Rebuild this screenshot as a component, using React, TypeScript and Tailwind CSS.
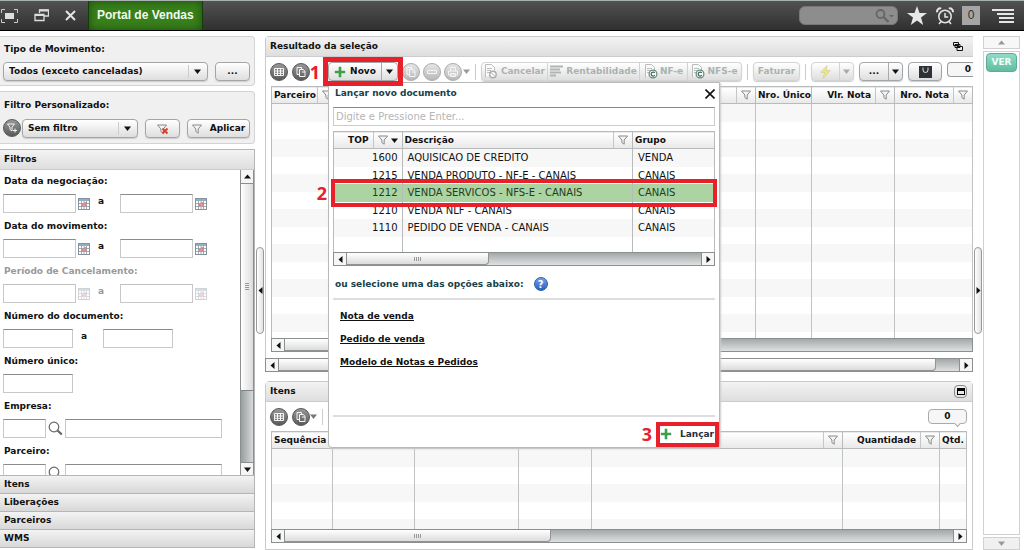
import type { ReactNode } from 'react';
import clsx from 'clsx';

type Column = {
  label?: string;
  width?: string;
  align?: string;
  filter?: boolean;
  sorted?: boolean;
};

const salesColumns: Column[] = [
  { label: 'Parceiro', width: 'w-[64px]', filter: true },
  { filter: true },
  { label: 'Nro. Único', width: 'w-[56px]' },
  { label: 'Vlr. Nota', width: 'w-[83px]', align: 'text-right', filter: true },
  { label: 'Nro. Nota', width: 'w-[78px]', align: 'text-right', filter: true },
];

const itemColumns: Column[] = [
  { label: 'Sequência', width: 'w-[60px]' },
  { width: 'w-[82px]' },
  { width: 'w-[104px]' },
  { width: 'w-[73px]' },
  { filter: true },
  { label: 'Quantidade', width: 'w-[97px]', align: 'text-right', filter: true },
  { label: 'Qtd.', width: 'w-[27px]' },
];

const topColumns: Column[] = [
  { label: 'TOP', width: 'w-[68px]', align: 'text-right', filter: true, sorted: true },
  { label: 'Descrição', filter: true },
  { label: 'Grupo', width: 'w-[82px]' },
];

const tops = [
  { code: '1600', name: 'AQUISICAO DE CREDITO', group: 'VENDA' },
  { code: '1215', name: 'VENDA PRODUTO - NF-E - CANAIS', group: 'CANAIS' },
  { code: '1212', name: 'VENDA SERVICOS - NFS-E - CANAIS', group: 'CANAIS' },
  { code: '1210', name: 'VENDA NLF - CANAIS', group: 'CANAIS' },
  { code: '1110', name: 'PEDIDO DE VENDA - CANAIS', group: 'CANAIS' },
];

const buttonStyle =
  'flex h-[19px] shrink-0 items-center justify-center rounded border border-[#a3a6a8] bg-gradient-to-b from-white to-[#dedede] text-[9px] font-bold shadow-[0_1px_1px_#ccc]';

/* Icons */

function FunnelIcon() {
  return (
    <svg viewBox="0 0 10 10" className="h-[10px] w-[10px] shrink-0" fill="#f4f4f4" stroke="#8a8a8a">
      <path d="M.5 1h9L6.2 5v4.2L3.9 7.6V5z" />
    </svg>
  );
}

function ClearFilterIcon() {
  return (
    <svg viewBox="0 0 12 12" className="h-3 w-3" fill="#f4f4f4" stroke="#8a8a8a">
      <path d="M.5 2h9L6.2 6v4.2L3.9 8.6V6z" />
      <path d="M5.5 5.5l5 5m0-5l-5 5" stroke="#d8402c" strokeWidth="2" />
    </svg>
  );
}

function CalendarIcon({ faded }: { faded?: boolean }) {
  return (
    <svg viewBox="0 0 12 12" className={clsx('h-3 w-3 shrink-0', faded && 'opacity-40')}>
      <rect x=".5" y=".5" width="11" height="11" fill="#fff" stroke="#85929b" />
      <rect x="1" y="1" width="10" height="2" fill="#8fb0c4" />
      <path d="M1 5.5h10M1 8.5h10M3.5 3v8M6 3v8M8.5 3v8" stroke="#8b979e" strokeWidth=".8" />
      <path d="M6.3 4h2v2h-2zM3.8 6h2v2.2h-2zM6.3 6h2v2.2h-2z" fill="#e87f88" />
    </svg>
  );
}

function MagnifierIcon() {
  return (
    <svg viewBox="0 0 15 15" className="h-[15px] w-[15px] shrink-0" fill="none" stroke="#666">
      <circle cx="6" cy="6" r="4.8" strokeWidth="1.2" />
      <path d="M9.5 9.5l4.3 4" strokeWidth="2.2" />
    </svg>
  );
}

function PlusIcon() {
  return (
    <svg viewBox="0 0 12 12" className="h-3 w-3 shrink-0" stroke="#3ba047" strokeWidth="2.6">
      <path d="M6 .8v10.4M.8 6h10.4" />
    </svg>
  );
}

function DocumentIcon({ kind }: { kind: 'cancel' | 'fiscal' }) {
  return (
    <svg viewBox="0 0 14 15" className="h-[15px] w-[14px] shrink-0" fill="none" stroke="#b9bdbd">
      <path d="M1.5 13.5V.5h6l3 3v3M3 4.5h5M3 6.5h4M3 8.5h3" fill="#fbfbfb" />
      {kind === 'cancel' ? (
        <>
          <circle cx="9" cy="10.5" r="3.2" fill="#fff" stroke="#aaa" strokeWidth="1.4" />
          <path d="M7 8.5l4 4" stroke="#aaa" />
        </>
      ) : (
        <>
          <circle cx="9" cy="10" r="3.9" fill="#fff" stroke="#608876" strokeWidth="1.2" />
          <path d="M10.8 8.9a2 2 0 1 0 0 2.3" stroke="#406d59" strokeWidth="1.3" />
        </>
      )}
    </svg>
  );
}

function ReportIcon() {
  return (
    <svg viewBox="0 0 13 13" className="h-[13px] w-[13px] shrink-0" stroke="#b1b4b4" strokeWidth="2">
      <path d="M0 1.5h13M0 4.5h10M0 7.5h11M0 10.5h6" />
    </svg>
  );
}

function Caret({ direction, className }: { direction: 'up' | 'down' | 'left' | 'right'; className?: string }) {
  const shapes = {
    up: 'M0 5.5h7L3.5 1.5z',
    down: 'M0 1.5h7L3.5 6z',
    left: 'M5.5 0v7L1.5 3.5z',
    right: 'M1.5 0v7l4-3.5z',
  };
  return (
    <svg viewBox="0 0 7 7" className={clsx('h-[7px] w-[7px] shrink-0', className)} fill="currentColor">
      <path d={shapes[direction]} />
    </svg>
  );
}

type RoundIcon = 'grid' | 'copy' | 'minus' | 'print' | 'filter';

function RoundButton({ icon, label, faded }: { icon: RoundIcon; label: string; faded?: boolean }) {
  return (
    <button
      aria-label={label}
      className={clsx(
        'flex h-[18px] w-[18px] shrink-0 items-center justify-center rounded-full border',
        faded ? 'border-[#aaa] bg-gradient-to-b from-[#e6e6e6] to-[#b8b8b8]' : 'border-[#555] bg-gradient-to-b from-[#999] to-[#5a5a5a]',
      )}
    >
      <svg viewBox="0 0 12 12" className="h-3 w-3" fill="none" stroke="#f5f5f5">
        {icon === 'grid' && <path d="M1.5 2.5h9v7h-9zM1.5 5h9M1.5 7.3h9M4.5 2.5v7M7.5 2.5v7" />}
        {icon === 'copy' && <path d="M2 1.5h4.5v2M2 1.5v7h2M4.5 3.5h4l1.5 2v5H4.5zM7 6h3" />}
        {icon === 'minus' && <path d="M1.5 4.5h9v3h-9z" />}
        {icon === 'print' && <path d="M3.5 5V1.5h5V5M1.5 5h9v4h-9zM3.5 7.5h5v3h-5z" />}
        {icon === 'filter' && <path d="M1.5 2h7L6 5v4L4 7.5V5zM9 6.5v4M7 8.5h4" />}
      </svg>
    </button>
  );
}

/* Scrollbars */

function HorizontalScrollbar({ thumb, end = true }: { thumb: string; end?: boolean }) {
  return (
    <div className="flex h-[14px] shrink-0 border border-[#8b8f8f] bg-gradient-to-b from-[#a4a8a8] to-[#dfe1e1]">
      <button aria-label="Rolar para a esquerda" className="flex w-[13px] shrink-0 items-center justify-center border-r border-[#8b8f8f] bg-[#f6f6f6]">
        <Caret direction="left" />
      </button>
      <div className={clsx('flex items-center justify-center rounded-br-sm border-r border-b border-[#909494] bg-gradient-to-b from-white to-[#dcdcdc]', thumb)}>
        <span className="h-1 w-2 bg-[repeating-linear-gradient(90deg,#999_0_1px,transparent_1px_2px)]" />
      </div>
      {end && (
        <button aria-label="Rolar para a direita" className="ml-auto flex w-[13px] shrink-0 items-center justify-center border-l border-[#8b8f8f] bg-[#f6f6f6]">
          <Caret direction="right" />
        </button>
      )}
    </div>
  );
}

function VerticalScrollbar() {
  return (
    <div className="flex w-[14px] shrink-0 flex-col border-x border-[#8b8f8f] bg-gradient-to-r from-[#999e9e] to-[#d7dada]">
      <button aria-label="Rolar para cima" className="flex h-[14px] items-center justify-center border-b border-[#8b8f8f] bg-[#f6f6f6]">
        <Caret direction="up" />
      </button>
      <div className="flex h-[68%] items-center justify-center border-b border-[#808484] bg-gradient-to-r from-white to-[#dcdcdc]">
        <span className="h-2 w-1 bg-[repeating-linear-gradient(#999_0_1px,transparent_1px_2px)]" />
      </div>
      <button aria-label="Rolar para baixo" className="mt-auto flex h-[13px] items-center justify-center border-t border-[#8b8f8f] bg-[#f6f6f6]">
        <Caret direction="down" />
      </button>
    </div>
  );
}

function Splitter({ direction }: { direction: 'left' | 'right' }) {
  return (
    <div className="flex w-[10px] shrink-0 items-center justify-center">
      <button
        aria-label="Recolher painel"
        className="flex h-[87px] w-2 items-center justify-center rounded border border-[#999] bg-gradient-to-r from-white to-[#e2e2e2]"
      >
        <Caret direction={direction} />
      </button>
    </div>
  );
}

/* Grid */

function GridHead({ columns }: { columns: Column[] }) {
  return (
    <thead>
      <tr className="h-[17px] border-y border-[#b8bbbb] bg-gradient-to-b from-white to-[#e9e9e9]">
        {columns.map((column, index) => (
          <th key={index} className={clsx('border-r border-[#b8bbbb] p-0 text-left', column.width)}>
            <div className="flex h-4 items-center">
              <span className={clsx('min-w-0 flex-1 pl-[2px] whitespace-nowrap', column.align, column.filter && column.align && 'pr-1')}>
                {column.label}
              </span>
              {column.filter && (
                <span className="flex h-4 shrink-0 items-center gap-[3px] border-l border-[#c4c7c7] px-1">
                  <FunnelIcon />
                  {column.sorted && <Caret direction="down" />}
                </span>
              )}
            </div>
          </th>
        ))}
      </tr>
    </thead>
  );
}

function EmptyGrid({ columns, rows }: { columns: Column[]; rows: number }) {
  return (
    <div className="min-h-0 flex-1 overflow-hidden border-l border-[#b8bbbb]">
      <table className="w-full table-fixed border-collapse">
        <GridHead columns={columns} />
        <tbody>
          {Array.from({ length: rows }, (_, row) => (
            <tr key={row} className="h-[18px] odd:bg-[#f7f7f7] even:h-[17px]">
              {columns.map((_column, index) => (
                <td key={index} className="border-r border-[#c0c3c3] p-0" />
              ))}
            </tr>
          ))}
        </tbody>
      </table>
    </div>
  );
}

function PanelHeader({ title, children }: { title: string; children?: ReactNode }) {
  return (
    <div className="flex h-5 shrink-0 items-center justify-between border-b border-[#ccc] bg-gradient-to-b from-[#f3f3f3] to-[#dedede] pr-[5px] pl-1">
      <h2>{title}</h2>
      {children}
    </div>
  );
}

/* Sidebar */

function TextBox({ label, id, width, disabled }: { label: string; id?: string; width: string; disabled?: boolean }) {
  return (
    <input
      id={id}
      aria-label={id ? undefined : label}
      disabled={disabled}
      className={clsx(
        'h-[19px] shrink-0 border border-[#c8c8c8] bg-white px-1 outline-none',
        disabled ? 'border-t-[#c0c0c0]' : 'border-t-[#8b8b8b]',
        width,
      )}
    />
  );
}

function Field({ label, id, disabled, children }: { label: string; id: string; disabled?: boolean; children: ReactNode }) {
  return (
    <div className={clsx('flex h-[45px] flex-col pl-[3px]', disabled && 'text-[#999]')}>
      <label htmlFor={id} className="flex h-6 items-center pb-[2px] pl-px">
        {label}
      </label>
      <div className="flex items-center">{children}</div>
    </div>
  );
}

function DateRange({ label, id, disabled }: { label: string; id: string; disabled?: boolean }) {
  return (
    <Field label={label} id={id} disabled={disabled}>
      <TextBox id={id} label={label} width="w-[73px]" disabled={disabled} />
      <button type="button" aria-label="Abrir calendário" className="ml-[2px]">
        <CalendarIcon faded={disabled} />
      </button>
      <span className="w-[30px] pb-1 pl-2">a</span>
      <TextBox label={`${label} até`} width="w-[73px]" disabled={disabled} />
      <button type="button" aria-label="Abrir calendário" className="ml-[2px]">
        <CalendarIcon faded={disabled} />
      </button>
    </Field>
  );
}

function Lookup({ label, id }: { label: string; id: string }) {
  return (
    <Field label={label} id={id}>
      <TextBox id={id} label={label} width="w-[43px]" />
      <button type="button" aria-label="Pesquisar" className="mx-[2px]">
        <MagnifierIcon />
      </button>
      <TextBox label={`Nome ${label}`} width="w-[157px]" />
    </Field>
  );
}

function Dropdown({ id, value }: { id: string; value: string }) {
  return (
    <div className="relative min-w-0 flex-1">
      <select id={id} className={clsx(buttonStyle, 'w-full appearance-none pl-[5px]')}>
        <option>{value}</option>
      </select>
      <span className="pointer-events-none absolute inset-y-[3px] right-[2px] flex w-[18px] items-center justify-center border-l border-[#ccc]">
        <Caret direction="down" />
      </span>
    </div>
  );
}

function Sidebar() {
  return (
    <aside className="flex w-[255px] shrink-0 flex-col pt-[5px] pb-[2px]">
      <section className="mb-[5px] h-[50px] shrink-0 rounded-r border border-l-0 border-[#d3d3d3] bg-[#f0f0f0] pr-1 pl-[3px]">
        <label htmlFor="tipo" className="flex h-[25px] items-center pb-px pl-px">
          Tipo de Movimento:
        </label>
        <div className="flex gap-[7px]">
          <Dropdown id="tipo" value="Todos (exceto canceladas)" />
          <button aria-label="Mais tipos" className={clsx(buttonStyle, 'w-[35px]')}>
            ...
          </button>
        </div>
      </section>

      <section className="mb-[5px] h-[53px] shrink-0 rounded-r border border-l-0 border-[#d3d3d3] bg-[#f0f0f0] pr-1 pl-[3px]">
        <label htmlFor="filtro" className="flex h-[27px] items-center pb-px pl-px">
          Filtro Personalizado:
        </label>
        <div className="flex">
          <RoundButton icon="filter" label="Novo filtro" />
          <div className="mr-[7px] ml-px flex flex-1">
            <Dropdown id="filtro" value="Sem filtro" />
          </div>
          <button aria-label="Limpar filtro" className={clsx(buttonStyle, 'mr-[7px] w-[35px]')}>
            <ClearFilterIcon />
          </button>
          <button className={clsx(buttonStyle, 'w-[63px] gap-2')}>
            <FunnelIcon />
            Aplicar
          </button>
        </div>
      </section>

      <section className="flex min-h-0 flex-1 flex-col border-r border-[#b5b5b5]">
        <div className="border-t border-[#b5b5b5]">
          <PanelHeader title="Filtros" />
        </div>
        <div className="flex min-h-0 flex-1">
          <form className="flex-1 overflow-hidden">
            <DateRange label="Data da negociação:" id="negociacao" />
            <DateRange label="Data do movimento:" id="movimento" />
            <DateRange label="Período de Cancelamento:" id="cancelamento" disabled />
            <Field label="Número do documento:" id="documento">
              <TextBox id="documento" label="Número do documento" width="w-[70px]" />
              <span className="w-[30px] pb-1 pl-2">a</span>
              <TextBox label="Número do documento até" width="w-[70px]" />
            </Field>
            <Field label="Número único:" id="unico">
              <TextBox id="unico" label="Número único" width="w-[70px]" />
            </Field>
            <Lookup label="Empresa:" id="empresa" />
            <Lookup label="Parceiro:" id="parceiro" />
          </form>
          <VerticalScrollbar />
        </div>
        {['Itens', 'Liberações', 'Parceiros', 'WMS'].map((title) => (
          <button
            key={title}
            className="h-[18px] shrink-0 border-t border-[#b5b5b5] bg-gradient-to-b from-[#f3f3f3] to-[#d8d8d8] pl-1 text-left last:h-[19px] last:border-b"
          >
            {title}
          </button>
        ))}
      </section>
    </aside>
  );
}

/* New document popup */

function NewDocumentPopup() {
  return (
    <div
      role="dialog"
      aria-labelledby="popup-title"
      className="absolute top-full left-0 z-10 mt-px flex h-[366px] w-[392px] flex-col rounded-b border border-[#b9b9b9] bg-white px-1 font-bold shadow-[1px_1px_2px_#ccc]"
    >
      <div className="flex h-6 items-center justify-between pb-[3px] pl-[2px]">
        <h2 id="popup-title" className="text-[#17414a]">
          Lançar novo documento
        </h2>
        <button aria-label="Fechar">
          <svg viewBox="0 0 10 10" className="h-[10px] w-[10px]" stroke="#111" strokeWidth="1.6">
            <path d="M.5.5l9 9m0-9l-9 9" />
          </svg>
        </button>
      </div>
      <input
        aria-label="Pesquisar TOP"
        placeholder="Digite e Pressione Enter..."
        className="h-[19px] shrink-0 border border-[#ccc] border-t-[#888] px-[2px] text-[10px] font-normal outline-none placeholder:text-[#b5b5b5]"
      />

      <div className="relative mt-[5px] shrink-0">
        <div className="h-[121px] overflow-hidden border-l border-[#b8bbbb]">
          <table className="w-full table-fixed border-collapse">
            <GridHead columns={topColumns} />
            <tbody className="text-[10px] font-normal">
              {tops.map((top) => (
                <tr
                  key={top.code}
                  className={clsx('h-[18px] even:h-[17px]', top.code === '1212' ? 'bg-[#acd3a2] text-[#1f3d24]' : 'odd:bg-[#f7f7f7]')}
                >
                  <td className="border-r border-[#b8bbbb] p-0 pr-1 text-right">{top.code}</td>
                  <td className="border-r border-[#b8bbbb] p-0 pl-[5px]">{top.name}</td>
                  <td className="border-r border-[#b8bbbb] p-0 pl-[5px]">{top.group}</td>
                </tr>
              ))}
              <tr className="h-[18px]">
                <td className="border-r border-[#b8bbbb]" />
                <td className="border-r border-[#b8bbbb]" />
                <td className="border-r border-[#b8bbbb]" />
              </tr>
            </tbody>
          </table>
        </div>
        <HorizontalScrollbar thumb="w-[142px]" />
        <div className="pointer-events-none absolute -inset-x-[2px] top-12 h-7 border-4 border-[#e8202a]">
          <Marker value="2" />
        </div>
      </div>

      <div className="flex h-[34px] shrink-0 items-center gap-[10px] border-b-2 border-[#ddd] pt-1 pl-[2px] text-[#17414a]">
        ou selecione uma das opções abaixo:
        <button
          aria-label="Ajuda"
          className="flex h-[14px] w-[14px] items-center justify-center rounded-full border border-[#2c5eab] bg-gradient-to-b from-[#70a3e8] to-[#2b60bc] text-[10px] text-white"
        >
          ?
        </button>
      </div>
      <nav className="flex flex-1 flex-col items-start gap-[9px] pt-[9px] pl-[7px] leading-[14px] underline">
        <a href="#nota">Nota de venda</a>
        <a href="#pedido">Pedido de venda</a>
        <a href="#modelo">Modelo de Notas e Pedidos</a>
      </nav>
      <div className="flex h-8 shrink-0 items-center justify-end border-t-2 border-[#ddd] pt-1">
        <div className="relative">
          <button className="flex h-[17px] w-[55px] items-center justify-between pr-px text-[#222f42]">
            <PlusIcon />
            Lançar
          </button>
          <div className="pointer-events-none absolute -inset-x-1 -inset-y-1 border-4 border-[#e8202a]">
            <Marker value="3" />
          </div>
        </div>
      </div>
    </div>
  );
}

function Marker({ value }: { value: string }) {
  return (
    <span className="absolute inset-y-0 right-full mr-2 flex items-center font-['Open_Sans',sans-serif] text-[18px] leading-none font-bold text-[#e8202a]">
      {value}
    </span>
  );
}

/* Main area */

function Separator() {
  return <span className="mx-[5px] h-4 w-px shrink-0 bg-[#ccc]" />;
}

function SalesToolbar() {
  return (
    <div className="flex h-[29px] shrink-0 items-center pl-1">
      <RoundButton icon="grid" label="Configurar grade" />
      <div className="ml-1 flex items-center">
        <RoundButton icon="copy" label="Opções" />
      </div>
      <div className="relative ml-[18px] shrink-0">
        <div className={clsx(buttonStyle, 'w-[70px]')}>
          <button className="flex flex-1 items-center justify-center gap-1">
            <PlusIcon />
            Novo
          </button>
          <button aria-label="Mais opções de novo" className="flex h-full w-4 items-center justify-center border-l border-[#aaa]">
            <Caret direction="down" />
          </button>
        </div>
        <NewDocumentPopup />
        <div className="pointer-events-none absolute -inset-x-[5px] -inset-y-[5px] z-20 border-[5px] border-[#e8202a]">
          <Marker value="1" />
        </div>
      </div>

      <div className="ml-1 flex shrink-0 items-center gap-[3px]">
        <RoundButton icon="copy" label="Duplicar" faded />
        <RoundButton icon="minus" label="Remover" faded />
        <RoundButton icon="print" label="Imprimir" faded />
        <Caret direction="down" className="-ml-[2px] text-[#999]" />
      </div>
      <Separator />

      <div className="flex shrink-0 text-[#aab2ae]">
        <button disabled className={clsx(buttonStyle, 'w-[67px] gap-[3px] rounded-r-none border-[#d3d3d3]')}>
          <DocumentIcon kind="cancel" />
          Cancelar
        </button>
        <button disabled className={clsx(buttonStyle, 'w-[92px] gap-[3px] rounded-none border-l-0 border-[#d3d3d3]')}>
          <ReportIcon />
          Rentabilidade
        </button>
        <button disabled className={clsx(buttonStyle, 'w-[48px] gap-[2px] rounded-none border-l-0 border-[#d3d3d3]')}>
          <DocumentIcon kind="fiscal" />
          NF-e
        </button>
        <button disabled className={clsx(buttonStyle, 'w-[54px] gap-[2px] rounded-l-none border-l-0 border-[#d3d3d3]')}>
          <DocumentIcon kind="fiscal" />
          NFS-e
        </button>
      </div>
      <Separator />
      <button disabled className={clsx(buttonStyle, 'w-[47px] border-[#d3d3d3] text-[#aab2ae]')}>
        Faturar
      </button>
      <Separator />

      <div className={clsx(buttonStyle, 'w-[43px] border-[#d3d3d3]')}>
        <button disabled aria-label="Ação rápida" className="flex flex-1 justify-center">
          <svg viewBox="0 0 11 14" className="h-[14px] w-[11px]" fill="#ece87c" stroke="#d3cf9a" strokeWidth=".7">
            <path d="M7 .5L.7 7.5h3.8L3 13.5l7.3-8H6z" />
          </svg>
        </button>
        <button disabled aria-label="Mais ações" className="flex h-full w-[14px] items-center justify-center border-l border-[#d3d3d3] text-[#aaa]">
          <Caret direction="down" />
        </button>
      </div>
      <div className={clsx(buttonStyle, 'ml-[5px] w-[44px]')}>
        <button aria-label="Outras opções" className="flex-1">
          ...
        </button>
        <button aria-label="Abrir outras opções" className="flex h-full w-[14px] items-center justify-center border-l border-[#aaa]">
          <Caret direction="down" />
        </button>
      </div>
      <button aria-label="Sacola" className={clsx(buttonStyle, 'ml-[5px] w-[34px]')}>
        <svg viewBox="0 0 13 12" className="h-3 w-[13px]">
          <path d="M0 0h13v12H0z" fill="#2e3236" />
          <path d="M4 1.5V4a2.5 2.5 0 0 0 5 0V1.5" fill="none" stroke="#ddd" />
        </svg>
      </button>
      <output className="mb-[5px] ml-[5px] flex h-[15px] min-w-0 flex-1 items-center justify-end rounded-l border border-r-0 border-[#999] bg-[#f6f6f6] pr-[2px]">
        0
      </output>
    </div>
  );
}

function SalesPanel() {
  return (
    <section className="flex min-h-0 flex-1 flex-col">
      <div className="flex min-h-0 flex-1 flex-col rounded-tl border-t border-l border-[#c9c9c9]">
        <PanelHeader title="Resultado da seleção">
          <button aria-label="Restaurar janelas" className="mr-[5px]">
            <svg viewBox="0 0 10 9" className="h-[9px] w-[10px]" fill="#eee" stroke="#111">
              <path d="M.5.5h5v3h-5zM2 2.5h5v3H2zM4 4.5h5.5v4H4z" />
            </svg>
          </button>
        </PanelHeader>
        <SalesToolbar />
        <div className="mb-[6px] ml-[5px] flex min-h-0 flex-1 flex-col">
          <EmptyGrid columns={salesColumns} rows={14} />
          <HorizontalScrollbar thumb="w-[200px]" end={false} />
        </div>
      </div>
      <HorizontalScrollbar thumb="w-[93%]" />
    </section>
  );
}

function ItemsPanel() {
  return (
    <section className="mt-[9px] flex h-[169px] shrink-0 flex-col rounded-t border border-[#c9c9c9]">
      <PanelHeader title="Itens">
        <button aria-label="Maximizar" className="flex h-[13px] w-[13px] items-center justify-center rounded-sm border border-[#888]">
          <span className="h-[7px] w-2 border border-t-[3px] border-black" />
        </button>
      </PanelHeader>
      <div className="flex h-[29px] shrink-0 items-center pr-[5px] pl-1">
        <RoundButton icon="grid" label="Configurar grade" />
        <div className="ml-1 flex items-center">
          <RoundButton icon="copy" label="Opções" />
          <Caret direction="down" className="text-[#777]" />
        </div>
        <Separator />
        <output className="relative ml-auto flex h-[15px] w-[39px] items-center justify-center rounded border border-[#aaa] bg-[#f6f6f6]">
          0
          <span className="absolute right-[6px] -bottom-[3px] h-[5px] w-[5px] rotate-45 border-r border-b border-[#aaa] bg-[#f6f6f6]" />
        </output>
      </div>
      <div className="mr-[5px] mb-[6px] ml-[5px] flex min-h-0 flex-1 flex-col">
        <EmptyGrid columns={itemColumns} rows={5} />
        <HorizontalScrollbar thumb="w-[266px]" />
      </div>
    </section>
  );
}

function TopBar() {
  return (
    <header className="flex h-[31px] shrink-0 items-center border-t border-b border-t-[#a9b1b1] border-b-black bg-gradient-to-b from-[#525252] to-[#303030] pr-[10px] text-[#ddd]">
      <button aria-label="Tela cheia">
        <svg viewBox="0 0 19 16" className="h-4 w-[19px]" fill="none" stroke="#ccc">
          <path d="M1.5 5V1.5H5M14 1.5h3.5V5M1.5 11v3.5H5M14 14.5h3.5V11" />
          <path d="M5 5h9v6H5z" fill="#ddd" stroke="none" />
        </svg>
      </button>
      <button aria-label="Restaurar" className="ml-[15px]">
        <svg viewBox="0 0 15 13" className="h-[13px] w-[15px]" fill="none" stroke="#ddd" strokeWidth="1.3">
          <path d="M5.5 4V1h9v6H10M1 5.5h9v6H1z" />
          <path d="M5.5 1.5h9M1 6h9" strokeWidth="1.8" />
        </svg>
      </button>
      <button aria-label="Fechar" className="ml-4">
        <svg viewBox="0 0 11 11" className="h-[11px] w-[11px]" stroke="#e5e5e5" strokeWidth="2">
          <path d="M1 1l9 9m0-9l-9 9" />
        </svg>
      </button>
      <div className="ml-3 flex h-full items-center border-x border-[#163c0a] bg-[#38801b] px-2 text-[12px] text-[#f2f8ef] shadow-[inset_0_0_9px_#1b4c0c]">
        <h1 className="font-['Liberation_Sans',sans-serif]">Portal de Vendas</h1>
      </div>

      <div className="relative ml-auto flex items-center">
        <input aria-label="Pesquisar" className="h-[19px] w-[99px] rounded-md border border-[#777] bg-[#8d8d8d] px-2 outline-none" />
        <svg viewBox="0 0 19 14" className="pointer-events-none absolute right-1 h-[14px] w-[19px]" fill="none" stroke="#666" strokeWidth="1.8">
          <circle cx="5.5" cy="5" r="4" />
          <path d="M8.5 8l5 5" strokeWidth="2.4" />
          <path d="M14 6h5l-2.5 2.5z" fill="#666" stroke="none" />
        </svg>
      </div>
      <button aria-label="Favoritos" className="ml-[9px]">
        <svg viewBox="0 0 20 19" className="h-[19px] w-5" fill="#e8e8e8">
          <path d="M10 0l2.5 7H20l-6 4.4L16.2 19 10 14.5 3.8 19 6 11.4 0 7h7.5z" />
        </svg>
      </button>
      <button aria-label="Alarmes" className="ml-[9px]">
        <svg viewBox="0 0 18 18" className="h-[18px] w-[18px]" fill="none" stroke="#e5e5e5" strokeWidth="1.5">
          <circle cx="9" cy="9.5" r="6.2" />
          <path d="M9 6v4h3.2M5 14.5L3 17M13 14.5l2 2.5" />
          <path d="M1.2 5.2a3 3 0 0 1 4-3.6M16.8 5.2a3 3 0 0 0-4-3.6" strokeWidth="2" />
        </svg>
      </button>
      <span className="ml-2 flex h-[19px] w-[18px] items-center justify-center bg-[#a5a5a5] font-['Liberation_Sans',sans-serif] text-[12px] font-normal text-[#333]">
        0
      </span>
      <button aria-label="Menu" className="ml-3">
        <svg viewBox="0 0 22 14" className="h-[14px] w-[22px]" stroke="#e5e5e5" strokeWidth="2">
          <path d="M0 1h22M5 5h17M7 9h15M7 13h15" />
        </svg>
      </button>
    </header>
  );
}

export default function App() {
  return (
    <div className="flex h-screen flex-col overflow-hidden bg-white font-['DejaVu_Sans',sans-serif] text-[9px] leading-[13px] font-bold text-[#111]">
      <TopBar />
      <div className="flex min-h-0 flex-1">
        <Sidebar />
        <Splitter direction="left" />
        <main className="flex min-w-0 flex-1 flex-col pt-[5px]">
          <SalesPanel />
          <ItemsPanel />
        </main>
        <Splitter direction="right" />

        <aside className="mr-1 flex w-[37px] shrink-0 flex-col pt-[5px]">
          <button aria-label="Subir" className="flex h-[13px] items-center justify-center border border-[#d0d0d0] bg-[#f7f7f7] text-[#999]">
            <Caret direction="up" />
          </button>
          <div className="my-[2px] flex flex-1 flex-col border border-[#d0d0d0] px-[2px] pt-px">
            <button className="h-[19px] rounded border border-[#5aae96] bg-gradient-to-b from-[#90dcc6] to-[#60bda2] text-[#f2fffb]">
              VER
            </button>
          </div>
          <button aria-label="Descer" className="flex h-[13px] items-center justify-center border border-[#d0d0d0] bg-[#f0f0f0] text-[#999]">
            <Caret direction="down" />
          </button>
        </aside>
      </div>
    </div>
  );
}
